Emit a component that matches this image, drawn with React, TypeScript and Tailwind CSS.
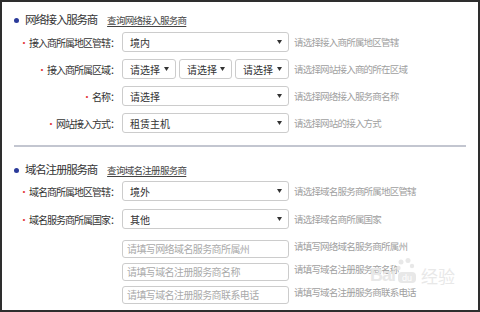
import React from 'react';

const font = { fontFamily: '"Noto Sans CJK SC", "Noto Sans", sans-serif' };

interface RowProps {
  label: string;
  hint: string;
  children: React.ReactNode;
}

const Row: React.FC<RowProps> = ({ label, hint, children }) => (
  <div className="flex items-center h-[20px]">
    <div className="w-[120px] shrink-0 text-right text-[10px] tracking-[-1px] text-[#333] pr-[3px]">
      <span className="text-[#e4393c] mr-[1px]">•</span>
      {label}：
    </div>
    <div className="flex gap-[3px] w-[167px] shrink-0">{children}</div>
    <div className="pl-[5px] text-[9.5px] tracking-[-0.8px] text-[#a0a0a0] whitespace-nowrap">{hint}</div>
  </div>
);

const Select: React.FC<{ value: string; className?: string }> = ({ value, className = 'w-full' }) => (
  <div
    className={`${className} h-[20px] flex items-center justify-between border border-[#ccc] rounded-[3px] bg-white pl-[7px] pr-[6px] text-[10px] text-[#333]`}
  >
    <span>{value}</span>
    <svg width="5" height="4" viewBox="0 0 5 4">
      <path d="M0 0 L5 0 L2.5 4 Z" fill="#333" />
    </svg>
  </div>
);

const Input: React.FC<{ placeholder: string }> = ({ placeholder }) => (
  <input
    type="text"
    placeholder={placeholder}
    className="w-full h-[18px] border border-[#ccc] rounded-[3px] bg-white px-[4px] text-[10px] tracking-[-0.6px] outline-none placeholder:text-[#aaa]"
  />
);

const Heading: React.FC<{ title: string; link: string }> = ({ title, link }) => (
  <div className="flex items-center h-[14px] pl-[12px]">
    <span className="w-[5px] h-[5px] rounded-full bg-[#2b3a9a] mr-[6px]" />
    <span className="text-[11.5px] tracking-[-1.2px] text-[#333]">{title}</span>
    <span className="ml-[10px] text-[9.5px] tracking-[-0.7px] text-[#444] underline underline-offset-2">{link}</span>
  </div>
);

export default function App() {
  return (
    <div
      style={font}
      className="relative w-[480px] h-[312px] border-2 border-[#2e2e2e] bg-white overflow-hidden"
    >
      <div className="flex flex-col pt-[11px]">
        <Heading title="网络接入服务商" link="查询网络接入服务商" />
        <div className="flex flex-col gap-[7px] mt-[5px]">
          <Row label="接入商所属地区管辖" hint="请选择接入商所属地区管辖">
            <Select value="境内" />
          </Row>
          <Row label="接入商所属区域" hint="请选择网站接入商的所在区域">
            <Select value="请选择" className="w-[54px]" />
            <Select value="请选择" className="w-[53px]" />
            <Select value="请选择" className="w-[54px]" />
          </Row>
          <Row label="名称" hint="请选择网络接入服务商名称">
            <Select value="请选择" />
          </Row>
          <Row label="网站接入方式" hint="请选择网站的接入方式">
            <Select value="租赁主机" />
          </Row>
        </div>

        <div className="mt-[12px] mx-[12px] h-[2px] bg-[#c3c6d0]" />

        <div className="mt-[16px]">
          <Heading title="域名注册服务商" link="查询域名注册服务商" />
        </div>
        <div className="flex flex-col gap-[8px] mt-[4px]">
          <Row label="域名商所属地区管辖" hint="请选择域名服务商所属地区管辖">
            <Select value="境外" />
          </Row>
          <Row label="域名服务商所属国家" hint="请选择域名商所属国家">
            <Select value="其他" />
          </Row>
        </div>
        <div className="flex flex-col gap-[5px] mt-[8px]">
          {[
            '请填写网络域名服务商所属州',
            '请填写域名注册服务商名称',
            '请填写域名注册服务商联系电话',
          ].map((text) => (
            <div key={text} className="flex items-center h-[18px]">
              <div className="w-[120px] shrink-0" />
              <div className="w-[167px] shrink-0">
                <Input placeholder={text} />
              </div>
              <div className="pl-[5px] text-[9.5px] tracking-[-0.8px] text-[#a0a0a0] whitespace-nowrap">{text}</div>
            </div>
          ))}
        </div>
      </div>

      {/* watermark */}
      <div className="absolute left-[368px] top-[256px] flex items-end whitespace-nowrap text-[#e8e8e8] pointer-events-none">
        <span className="text-[18px] font-bold leading-none tracking-[-1px]" style={{ fontFamily: '"Liberation Sans", sans-serif' }}>
          Bai
        </span>
        <svg width="22" height="26" viewBox="0 0 22 26" className="mx-[1px]">
          <circle cx="5" cy="4" r="2.5" fill="#e8e8e8" />
          <circle cx="12" cy="2.5" r="2.5" fill="#e8e8e8" />
          <circle cx="2.5" cy="10" r="2.2" fill="#e8e8e8" />
          <circle cx="16" cy="8" r="2.2" fill="#e8e8e8" />
          <rect x="2" y="14" width="18" height="11" rx="4" fill="#e8e8e8" />
          <text x="11" y="23" textAnchor="middle" fontSize="9" fill="#fff" fontFamily="Liberation Sans">du</text>
        </svg>
        <span className="text-[17px] leading-none ml-[2px]">经验</span>
      </div>
    </div>
  );
}
